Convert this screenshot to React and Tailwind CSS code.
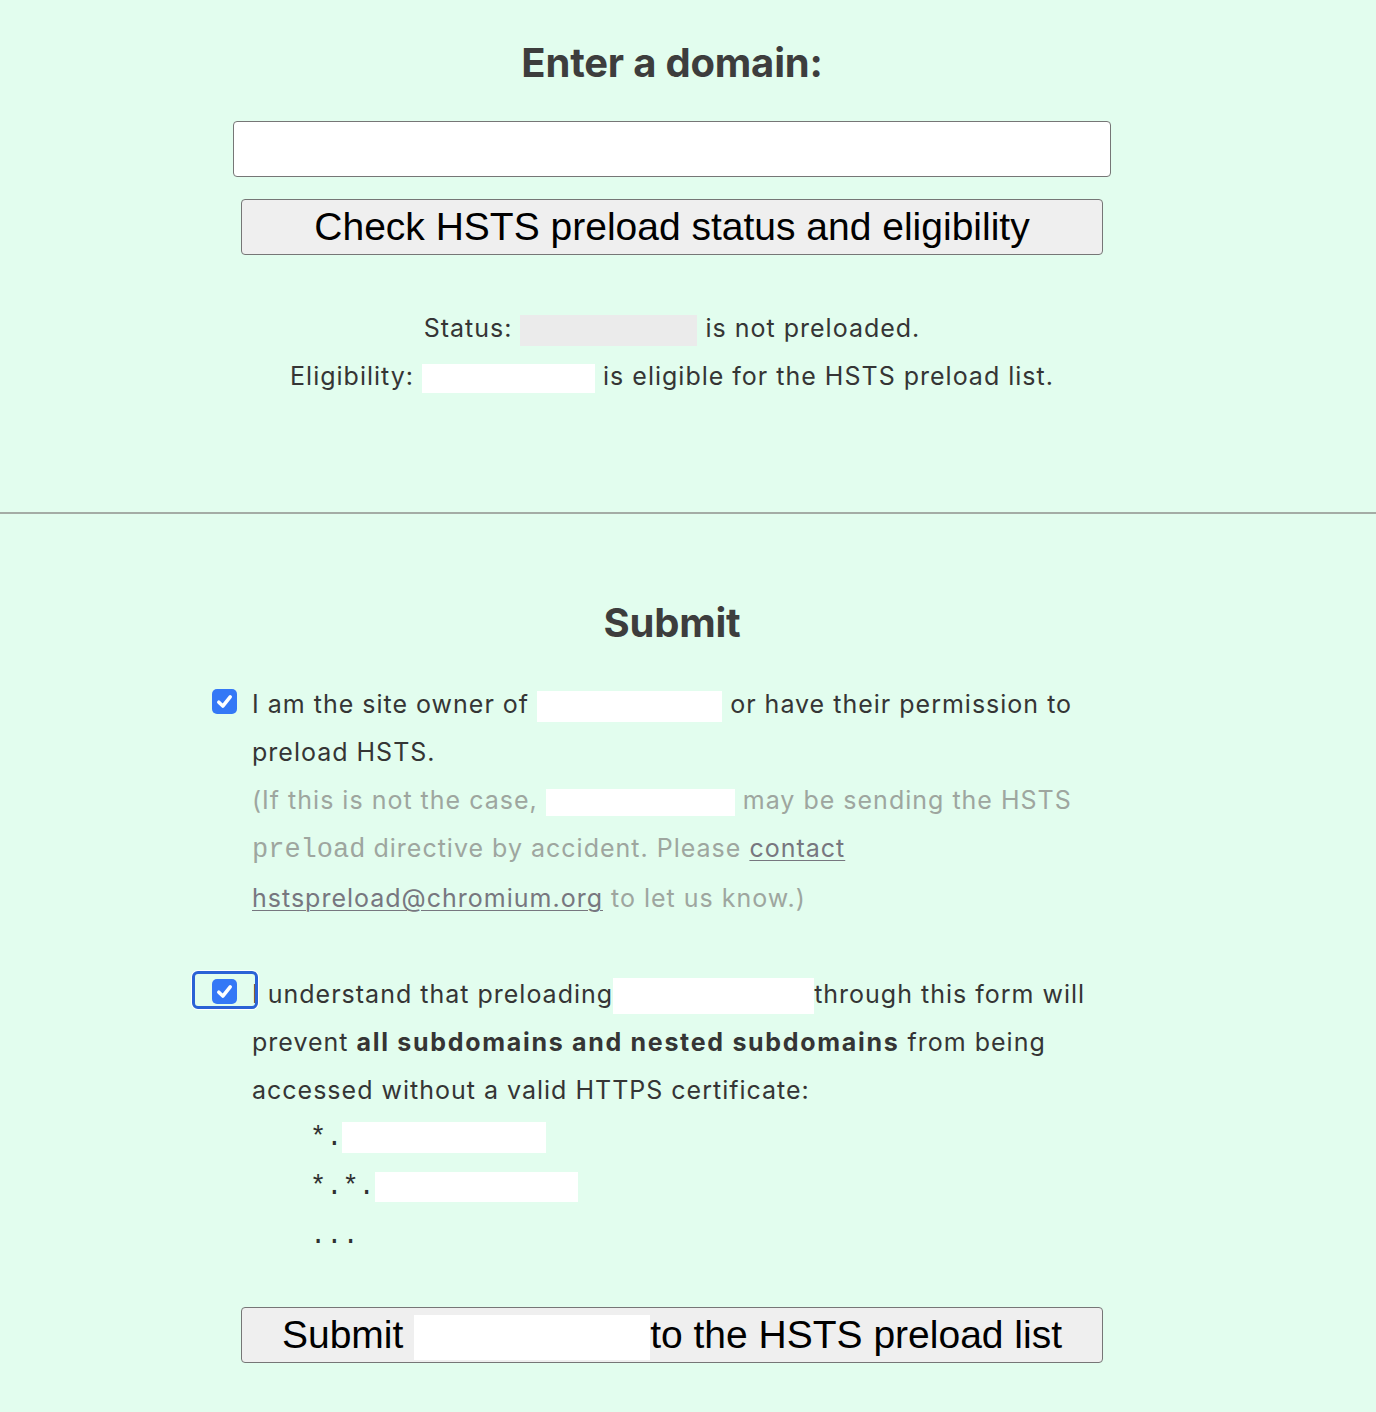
import React from "react";

function Box({ w, h, c = "bg-white", cls = "" }) {
  return <span className={`inline-block align-middle ${c} ${cls}`} style={{ width: w, height: h }} />;
}

function Check() {
  return (
    <span className="flex h-[25px] w-[25px] items-center justify-center rounded-[5px] bg-[#3478f6]">
      <svg width="19" height="19" viewBox="0 0 16 16" fill="none">
        <path d="M3.2 8.6 L6.6 11.8 L12.8 4.2" stroke="white" strokeWidth="3" strokeLinecap="round" strokeLinejoin="round" />
      </svg>
    </span>
  );
}

export default function App() {
  const btn =
    "block h-[56px] w-[862px] mx-auto rounded-[4px] border border-[#767676] bg-[#efefef] text-black text-[39px] leading-[54px] font-['Liberation_Sans',Arial,sans-serif] whitespace-nowrap";
  return (
    <div className="min-h-[1412px] w-full bg-[#e2fdee] font-['Inter','Noto_Sans',sans-serif] text-[#353535]">
      <div className="w-[1344px] pt-[41px]">
        <h1 className="text-center text-[40px] leading-[44px] font-bold tracking-[-0.2px] text-[#3d3d3d]">Enter a domain:</h1>
        <div className="mt-[36px] mx-auto h-[56px] w-[878px] rounded-[4px] border border-[#767676] bg-white" />
        <div className="mt-[22px]">
          <button className={btn}>Check HSTS preload status and eligibility</button>
        </div>
        <div className="mt-[49px] text-center text-[25px] leading-[48px] tracking-[1px]">
          <div>
            Status: <Box w={177} h={31} c="bg-[#ebebeb]" /> is not preloaded.
          </div>
          <div>
            Eligibility: <Box w={173} h={29} /> is eligible for the HSTS preload list.
          </div>
        </div>
      </div>
      <div className="mt-[112px] h-[2px] w-full bg-[#a4aca5]" />
      <div className="w-[1344px] pb-[51px]">
        <h2 className="mt-[87px] text-center text-[40px] leading-[44px] font-bold tracking-[-0.2px] text-[#3d3d3d]">Submit</h2>
        <div className="mx-auto mt-[35px] w-[920px] text-[25px] leading-[48px] tracking-[1px]">
          <div className="flex">
            <div className="w-[40px] shrink-0 pt-[9px]">
              <Check />
            </div>
            <div className="flex-1 whitespace-nowrap">
              <div>
                I am the site owner of <Box w={185} h={31} /> or have their permission to
                <br />
                preload HSTS.
              </div>
              <div className="text-[#9ea69f]">
                (If this is not the case, <Box w={189} h={27} /> may be sending the HSTS
                <br />
                <code className="font-['Liberation_Mono','Courier_New',monospace] text-[27px] tracking-[0px]">preload</code>{" "}
                directive by accident. Please{" "}
                <a href="#" className="text-[#77777f] underline decoration-1 underline-offset-[3px]">
                  contact
                  <br />
                  hstspreload@chromium.org
                </a>{" "}
                to let us know.)
              </div>
            </div>
          </div>
          <div className="mt-[48px] flex">
            <div className="relative w-[40px] shrink-0 pt-[9px]">
              <Check />
              <span className="absolute left-[-20px] top-[1px] h-[38px] w-[66px] rounded-[6px] border-[3px] border-[#2b62d6] shadow-[0_0_0_1px_white]" />
            </div>
            <div className="flex-1 whitespace-nowrap">
              <div>
                I understand that preloading<Box w={201} h={36} />through this form will
                <br />
                prevent <b className="font-bold tracking-[1.7px]">all subdomains and nested subdomains</b> from being
                <br />
                accessed without a valid HTTPS certificate:
              </div>
              <div className="ml-[58px] font-['Liberation_Mono','Courier_New',monospace] text-[27px] leading-[49px] tracking-[0px] text-[#303030]">
                <div>
                  *.<Box w={204} h={31} />
                </div>
                <div>
                  *.*.<Box w={203} h={30} />
                </div>
                <div>...</div>
              </div>
            </div>
          </div>
        </div>
        <div className="mt-[46px]">
          <button className={btn}>
            Submit <Box w={236} h={45} cls="align-[-12px]" />to the HSTS preload list
          </button>
        </div>
      </div>
    </div>
  );
}
